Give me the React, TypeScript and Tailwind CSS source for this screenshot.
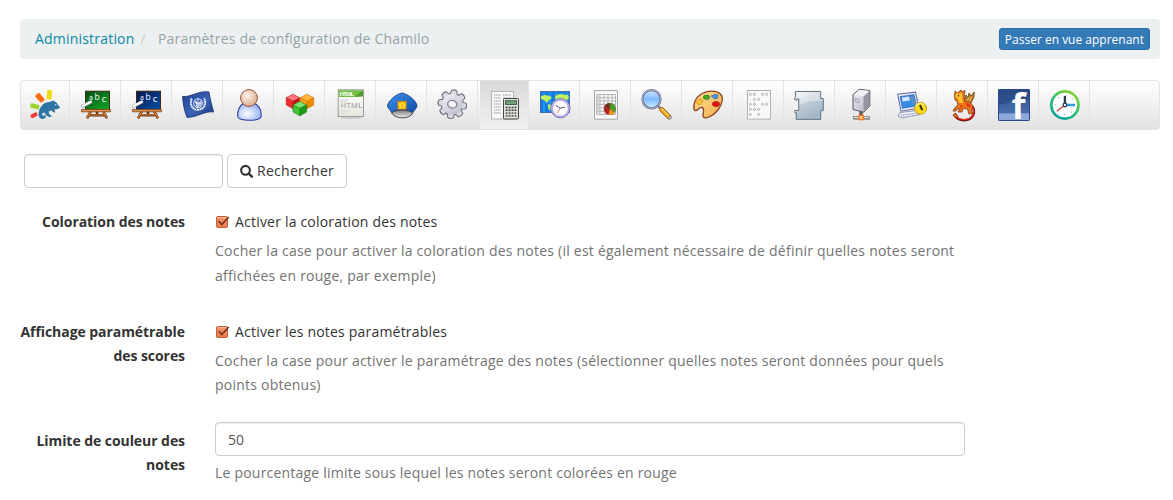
import type { ReactNode } from "react";

const sans = "'Open Sans', sans-serif";

function Chameleon() {
  return (
    <>
      <rect x="17.8" y="1" width="5" height="9.5" rx="1.2" fill="#efdc10" transform="rotate(6 20 6)" />
      <rect x="8.2" y="4" width="5.4" height="9.5" rx="1.2" fill="#ff6a13" transform="rotate(-42 11 8.7)" />
      <rect x="1.3" y="15" width="9" height="4.6" rx="1.2" fill="#9bd22d" transform="rotate(14 5.7 17.3)" />
      <rect x="1.4" y="24.2" width="7" height="4" rx="1.2" fill="#ee3b3b" transform="rotate(-28 5 26)" />
      <path
        d="M10 22.5C11 17 15.5 12.8 20.5 13L24 11.6L27.5 13.4L29 16L31.2 18.6C29.5 20.3 27 20.6 25.2 20.5L26.5 23.5L24 23L22.5 21.4L19.5 22.5L20.5 25.4L23 27L20.5 28.2L17.5 26.4L15.5 23.8C13.5 23.4 12.6 25 13.5 26.2C14.3 27.2 15.8 26.7 15.8 25.5C18 27 16.5 30.2 13.3 30C9.6 29.5 9 25.5 10 22.5Z"
        fill="#2f75a3"
      />
      <circle cx="26.5" cy="15.8" r=".8" fill="#d8ecf7" />
    </>
  );
}

function Board({ id, from, to }: { id: string; from: string; to: string }) {
  return (
    <>
      <defs>
        <linearGradient id={id} x1="0" y1="0" x2="1" y2="1">
          <stop offset="0" stopColor={from} />
          <stop offset="1" stopColor={to} />
        </linearGradient>
      </defs>
      <path d="M11 22L7 29.3M23 22L27 29.3M9 26.3H25M17 22V27" stroke="#6b3410" strokeWidth="2.6" />
      <path d="M11 22L7 29M23 22L27 29M9.5 26H24.5" stroke="#d3823b" strokeWidth="1.2" />
      <rect x="5.5" y="2.2" width="24" height="18.6" fill={`url(#${id})`} stroke="#3c2a16" />
      <rect x="1.4" y="20.4" width="29.2" height="2.4" rx=".6" fill="#e09550" stroke="#7a3d12" strokeWidth=".8" />
      <text x="9" y="10.5" fontFamily={sans} fontSize="7" fill="#fff">a</text>
      <text x="14.6" y="11" fontFamily={sans} fontSize="8.5" fill="#fff">b</text>
      <text x="21.7" y="12.7" fontFamily={sans} fontSize="9.5" fill="#fff">c</text>
      <path d="M2.8 17.2L10.8 13" stroke="#9a9aa2" strokeWidth="3.2" strokeLinecap="round" />
      <path d="M2.8 17L10.8 12.8" stroke="#fff" strokeWidth="2.2" strokeLinecap="round" />
    </>
  );
}

function Flag() {
  return (
    <>
      <defs>
        <linearGradient id="flag" x1="0" y1="0" x2="1" y2="1">
          <stop offset="0" stopColor="#1e3f91" />
          <stop offset=".55" stopColor="#3a62b6" />
          <stop offset="1" stopColor="#173581" />
        </linearGradient>
      </defs>
      <path d="M.6 7.5C9 8.5 17 1.2 27 3C28 10 30 17 31.6 23C23 21.5 15 28.7 5 28.4C2 21 1 14 .6 7.5Z" fill="url(#flag)" stroke="#122a69" strokeWidth=".8" />
      <g fill="none" stroke="#e8eefb">
        <circle cx="16" cy="14.2" r="4.4" strokeWidth="1" />
        <path d="M12 11L19 18M20 11L13 18M16 10V19" strokeWidth=".8" />
        <path d="M9.8 9.5C7.3 15 10 20.8 16 20.8C22.4 20.3 24.7 15 22 8.8" strokeWidth="1.9" strokeDasharray="2 .4" />
      </g>
      <path d="M13 12L16 13L14 16ZM17 14L20 13L18 17ZM14 16L17 17L15 18Z" fill="#fff" />
    </>
  );
}

function Person() {
  return (
    <>
      <defs>
        <radialGradient id="head" cx=".4" cy=".35" r=".7">
          <stop offset="0" stopColor="#fff4ea" />
          <stop offset="1" stopColor="#dba98a" />
        </radialGradient>
        <radialGradient id="body" cx=".4" cy=".6" r=".7">
          <stop offset="0" stopColor="#fff" />
          <stop offset="1" stopColor="#86a9f5" />
        </radialGradient>
      </defs>
      <path d="M10 14.5H22C26 17 28.4 22 28.2 27C28 30 24 31.3 16.4 31.3C8.5 31.3 4.8 30 4.7 27C4.6 22 6 17.5 10 14.5Z" fill="url(#body)" stroke="#293ca0" strokeWidth="1.1" />
      <circle cx="16" cy="9" r="8.4" fill="url(#head)" stroke="#97523d" strokeWidth="1" />
    </>
  );
}

function Cube({ x, y, top, left, right, edge }: { x: number; y: number; top: string; left: string; right: string; edge: string }) {
  return (
    <g transform={`translate(${x} ${y})`} stroke={edge} strokeWidth=".5" strokeLinejoin="round">
      <path d="M0-7.2L6.8-3.6L0 0L-6.8-3.6Z" fill={top} />
      <path d="M-6.8-3.6L0 0V7.4L-6.8 3.6Z" fill={left} />
      <path d="M6.8-3.6L0 0V7.4L6.8 3.6Z" fill={right} />
    </g>
  );
}

function Cubes() {
  return (
    <>
      <Cube x={9} y={12.3} top="#ff7474" left="#f02c2c" right="#c91414" edge="#a81a1a" />
      <Cube x={23} y={12.3} top="#ffb638" left="#ffa116" right="#ee8a00" edge="#c07000" />
      <Cube x={15.8} y={19.5} top="#7ee06c" left="#45c535" right="#169a17" edge="#147a14" />
    </>
  );
}

function Html() {
  return (
    <>
      <defs>
        <linearGradient id="page" x1="0" y1="0" x2="0" y2="1">
          <stop offset="0" stopColor="#fff" />
          <stop offset="1" stopColor="#e6e6e0" />
        </linearGradient>
      </defs>
      <ellipse cx="16" cy="28.8" rx="11" ry="1.2" fill="#cfcfcf" />
      <rect x="3.2" y=".8" width="25.2" height="26.8" fill="url(#page)" stroke="#8f918b" strokeWidth=".9" />
      <path d="M3.6 1.2H28V5.5L22 8H3.6Z" fill="#72bd43" />
      <path d="M28 1.2V7.5L20 8Z" fill="#4d9c2b" />
      <text x="4.5" y="7" fontFamily={sans} fontWeight="700" fontSize="6" textLength="14.5" fill="#fff">HTML</text>
      <path d="M5 11H14M5 13H12M5 22H15M5 24H11" stroke="#d5d5d0" />
      <text x="5.6" y="19" fontFamily={sans} fontSize="7.6" textLength="21.5" fill="#8f8f8f">HTML</text>
    </>
  );
}

function Cap() {
  return (
    <>
      <defs>
        <linearGradient id="cap" x1="0" y1="0" x2="1" y2="1">
          <stop offset="0" stopColor="#3f95ee" />
          <stop offset="1" stopColor="#0b4aaa" />
        </linearGradient>
        <linearGradient id="visor" x1="0" y1="0" x2="0" y2="1">
          <stop offset="0" stopColor="#7c7c7c" />
          <stop offset="1" stopColor="#eee" />
        </linearGradient>
      </defs>
      <path d="M16 4C22 5 30.8 12 31 17C31 19 28 21 26.5 24H6C4.5 21 1.6 19 1.5 17C2 12 10 5 16 4Z" fill="url(#cap)" stroke="#183d87" strokeWidth=".9" />
      <path d="M5.7 24C9 20 23 20 26.7 24C24 30.5 9 30.5 5.7 24Z" fill="url(#visor)" stroke="#333a46" strokeWidth=".9" />
      <path d="M12 12.3L14 13L16 12.2L18 13L20 12.3V20H12Z" fill="#ffdc31" stroke="#e08a00" strokeWidth="1.2" />
      <path d="M15 14.5H17V18H15Z" fill="#f8b81c" />
    </>
  );
}

function Gear() {
  const teeth = [0, 45, 90, 135, 180, 225, 270, 315];
  return (
    <>
      <defs>
        <linearGradient id="gear" x1="0" y1="0" x2="1" y2="1">
          <stop offset="0" stopColor="#f4f4fa" />
          <stop offset="1" stopColor="#b7b9c7" />
        </linearGradient>
      </defs>
      <g transform="translate(15.3 15.2) rotate(8)">
        {teeth.map((a) => (
          <path key={a} d="M-3.6-9L-2.7-13.5Q0-15.2 2.7-13.5L3.6-9Z" transform={`rotate(${a})`} fill="#e7e7f0" stroke="#70727f" strokeWidth="1.2" />
        ))}
        <circle r="11.2" fill="#70727f" />
        {teeth.map((a) => (
          <path key={a} d="M-3.2-7L-2.3-13Q0-14.3 2.3-13L3.2-7Z" transform={`rotate(${a})`} fill="#d8d8e3" />
        ))}
        <circle r="10.4" fill="url(#gear)" />
        <ellipse rx="4.6" ry="3.8" fill="#f4f4f4" stroke="#858795" strokeWidth="1.3" />
      </g>
    </>
  );
}

function Calculator() {
  return (
    <>
      <rect x="3.6" y="2.4" width="22" height="27.6" fill="#fafafa" stroke="#b0b0b0" />
      <path d="M6 6H13M15 6H23M6 9H13M15 9H23M6 12H13M6 15H13M6 18H13M6 21H13M6 24H13" stroke="#b4b4b4" strokeWidth="1.7" strokeDasharray="1.5 .6" />
      <rect x="15.5" y="9.5" width="15" height="20.5" rx="1" fill="#deded9" stroke="#454944" />
      <rect x="17.6" y="11.8" width="10.8" height="3.6" fill="#75a77e" stroke="#2e5134" strokeWidth=".9" />
      <path d="M17.8 18.5H28.5M17.8 21.3H28.5M17.8 24.1H28.5M17.8 26.9H28.5" stroke="#333" strokeWidth="1.4" strokeDasharray="1.8 1.1" />
    </>
  );
}

function MapClock() {
  return (
    <>
      <rect x="1.4" y="2.4" width="29" height="21.2" fill="#127be6" stroke="#365d9c" strokeWidth=".8" />
      <path d="M5 3V23M11 3V23M17 3V23M23 3V23M28 3V23" stroke="#35a0f5" strokeWidth="1.3" />
      <path d="M2 7L6 6L11 7L13 9L10 11L8 14L5 11L2 10ZM9 15L12 16L11 22L9 19ZM16 7L20 5L29 6L30 9L27 12L24 10L19 12L16 10Z" fill="#bff05e" />
      <circle cx="21.4" cy="19.2" r="9.6" fill="#f6f4ff" stroke="#6d65ac" strokeWidth="1" />
      <circle cx="21.4" cy="19.2" r="8.3" fill="#fff" stroke="#b4a9e2" strokeWidth="1.6" />
      <circle cx="21.4" cy="19.2" r="6.2" fill="none" stroke="#aaa" strokeWidth=".6" strokeDasharray=".6 2.5" />
      <path d="M16.5 16.3L21.4 19.2L26 18" fill="none" stroke="#595968" strokeWidth="1" />
      <path d="M21.7 18.8L18 24" stroke="#df5c4f" strokeWidth=".9" />
    </>
  );
}

function Report() {
  return (
    <>
      <rect x="4.5" y="1.6" width="22.9" height="28.6" fill="#f9f9f9" stroke="#a5a5a5" />
      <path d="M6.5 5.5H25.5V25.5H6.5ZM6.5 8.8H25.5M6.5 12H25.5M6.5 15.4H25.5M6.5 18.8H25.5M6.5 22.2H25.5M10 5.5V25.5M14 5.5V25.5M18 5.5V25.5M22 5.5V25.5" fill="none" stroke="#b5b5b5" />
      <path d="M6.5 5.5H10V25.5H6.5Z" fill="#c6c6c6" fillOpacity=".5" />
      <circle cx="19.8" cy="20" r="5.9" fill="#b52020" />
      <path d="M19.8 20V14.1A5.9 5.9 0 0 1 24.5 23.5Z" fill="#4b9c2c" />
      <path d="M19.8 20L24.5 23.5A5.9 5.9 0 0 1 18.5 25.8Z" fill="#ed9a20" />
      <path d="M19.8 20V14.1A5.9 5.9 0 0 0 14.2 18Z" fill="#7a3020" />
    </>
  );
}

function Magnifier() {
  return (
    <>
      <defs>
        <linearGradient id="lens" x1="0" y1="0" x2="0" y2="1">
          <stop offset="0" stopColor="#d4eaff" />
          <stop offset=".5" stopColor="#7bb8ff" />
          <stop offset="1" stopColor="#d3f6ff" />
        </linearGradient>
      </defs>
      <path d="M17 17L21 21" stroke="#7e8089" strokeWidth="2.4" />
      <path d="M20.7 20.5L28.2 28" stroke="#975400" strokeWidth="4.6" strokeLinecap="round" />
      <path d="M20.7 20.5L27.5 27.3" stroke="#f4ac26" strokeWidth="3.2" strokeLinecap="round" />
      <path d="M21.2 19.8L28 26.4" stroke="#ffe27d" strokeWidth="1" />
      <circle cx="29" cy="28.6" r="1.5" fill="#ccc" stroke="#777" strokeWidth=".6" />
      <circle cx="10.5" cy="10.2" r="9.1" fill="url(#lens)" stroke="#696f93" strokeWidth="2.2" />
      <circle cx="10.5" cy="10.2" r="9.2" fill="none" stroke="#b8bcd5" strokeWidth=".8" />
    </>
  );
}

function Palette() {
  return (
    <>
      <defs>
        <linearGradient id="wood" x1="0" y1="0" x2="1" y2="1">
          <stop offset="0" stopColor="#ffe294" />
          <stop offset="1" stopColor="#f2aa4d" />
        </linearGradient>
      </defs>
      <path d="M2 16C3 8 11 2.1 20 2.2C27 2.2 31 6 30.3 11C29.5 18 24 25 17 28C13 29.8 10.5 28.7 11 26C11.4 23 12.5 20 10.5 18.6C8.5 17.4 6.5 20.3 4.5 21.3C2 22.4 1.4 19 2 16Z" fill="url(#wood)" stroke="#8e4021" strokeWidth="1.3" />
      <ellipse cx="7.7" cy="12.8" rx="3.2" ry="2.4" fill="#ffc130" stroke="#c57b1c" strokeWidth=".6" transform="rotate(-30 7.7 12.8)" />
      <ellipse cx="14.5" cy="8.3" rx="3.2" ry="2.2" fill="#40a91e" stroke="#286e16" strokeWidth=".6" />
      <path d="M19 7L23 5.5L26 6L25.2 9.5L22.5 9.8Z" fill="#4391ee" stroke="#2459a6" strokeWidth=".6" />
      <ellipse cx="24" cy="15" rx="3.6" ry="2.6" fill="#e51313" stroke="#97120e" strokeWidth=".6" />
    </>
  );
}

const brailleDots: [number, number][] = [
  [0, 0], [1, 0], [3, 0], [4, 0], [1, 1], [2, 1], [0, 2], [1, 2], [3, 2], [4, 2], [0, 3], [1, 3], [2, 3], [0, 4], [2, 4],
];

function Braille() {
  return (
    <>
      <rect x="4.5" y="1.5" width="23" height="28.6" fill="#f8f8f8" stroke="#b0b0b0" />
      {brailleDots.map(([c, r]) => (
        <circle key={`${c}-${r}`} cx={7.4 + c * 4.05} cy={5.4 + r * 5} r="1" fill="#fff" stroke="#919191" strokeWidth=".7" />
      ))}
    </>
  );
}

function Puzzle() {
  return (
    <>
      <defs>
        <linearGradient id="puzzle" x1="0" y1="0" x2=".5" y2="1">
          <stop offset="0" stopColor="#edf3f7" />
          <stop offset=".5" stopColor="#bfcbd5" />
          <stop offset="1" stopColor="#a2b5c4" />
        </linearGradient>
      </defs>
      <path d="M1.5 2.6H26.8V9.8H29.3V21.6H26.8V30.2H2V22.7L4.6 21.4V11L1.5 9.7Z" fill="url(#puzzle)" />
      <path d="M4.8 17C12 11 22 12 29 12V10H26.7V3H3V8.6L5 10Z" fill="#fff" fillOpacity=".35" />
      <path d="M.8 8.3V11H2.7V10H4.8V21.5H.8V23.7H2.2V30.4H26.7V21.7H29.3V9.5H26.7V2.5H1.4V8.3" fill="none" stroke="#647582" strokeWidth="1" />
    </>
  );
}

function Server() {
  return (
    <>
      <defs>
        <linearGradient id="server" x1="0" y1="0" x2="1" y2="1">
          <stop offset="0" stopColor="#f4f4f8" />
          <stop offset="1" stopColor="#b0b0be" />
        </linearGradient>
      </defs>
      <path d="M16 22V29M8.3 28.8H25" stroke="#5d5d63" strokeWidth="3.4" />
      <path d="M9 28.5H24.6" stroke="#e2e2e6" strokeWidth="1.8" />
      <path d="M8 5.6L14.2.3L24.8 1.5V17L18.6 23.2L8 20.5Z" fill="url(#server)" stroke="#55555e" strokeWidth="1" />
      <path d="M8.5 5.8L14.5.8L24.4 2L18.5 7.4Z" fill="#f0f0f5" />
      <path d="M18.5 7.5L24.4 2.2V16.8L18.5 22.6Z" fill="#9494a2" />
      <path d="M10 9L14 10V14L10 13Z" fill="#c8c8d5" stroke="#8c8c99" strokeWidth=".5" />
      <path d="M11 16L17 18M11 18L17 20" stroke="#c3c3cd" strokeWidth=".7" />
      <rect x="13.9" y="26.3" width="4.4" height="4.4" fill="#ffc489" stroke="#f4741b" strokeWidth="1.2" />
    </>
  );
}

function SecureComputer() {
  return (
    <>
      <path d="M4 23.5L20 21.5L24 25.5L6 29L2 27Z" fill="#ededfa" stroke="#8a8eb4" strokeWidth=".9" />
      <path d="M5 26.5L21 24" stroke="#8d91b4" strokeDasharray="1.4 .7" />
      <path d="M1.7 5.2L19.5 3.2L22.7 19L5 22.2Z" fill="#eeeef9" stroke="#6870a5" strokeWidth="1.1" />
      <path d="M4 7.6L18 5.6L20.5 17L6.3 19.4Z" fill="#388be5" stroke="#285fb0" strokeWidth=".6" />
      <path d="M6 8.5L13 7.6L14 11.5L6.7 12.6Z" fill="#fff" fillOpacity=".8" />
      <path d="M16 7C15 13 18 14 21 16M22 10C21 13 21 15 23 17" fill="none" stroke="#8c8c94" strokeWidth="1.2" />
      <circle cx="24.6" cy="19.3" r="6" fill="#ffd91b" stroke="#be9200" strokeWidth=".8" />
      <path d="M19.8 17C21 14.5 25 13.3 28 16" fill="none" stroke="#fff493" strokeWidth="1.2" />
      <path d="M24.2 16.8L25 18.3L26 20.5" stroke="#222" strokeWidth="1.9" strokeLinecap="round" />
    </>
  );
}

function Griffin() {
  return (
    <>
      <path d="M8 26C11 33 23 33 26.3 26C28.6 19 25 15.5 19 16" fill="none" stroke="#7e1310" strokeWidth="2.4" />
      <path d="M8 26C11 32 23 32 26 26C28 19 25 16 19 16.5" fill="none" stroke="#f22b20" strokeWidth="1.2" />
      <path d="M17 12L19 6L21 9L22 4L24 7L27.3 3L27 8L24 14L19 16Z" fill="#c7852b" stroke="#5c3412" strokeWidth=".8" />
      <path d="M20 13L22 8M22 13L25 8" stroke="#eec16a" strokeWidth=".8" />
      <path d="M7.5 7L8 2L10.5 4L14 1L15 3L18 1.5L17 8L18 12L23 13L26 17L24.5 22L26 24.5L22 25L20.5 20L16 19.5L15 23L11 23L13 20L10 20L9 22L6 22L8 18.5L11 16L10 12L8 11Z" fill="#ed751c" stroke="#823b12" strokeWidth=".8" />
      <path d="M9 4L12 5L15 3L15.4 9L16 14L12 14L11 10L8.5 8Z" fill="#ffc22c" />
      <path d="M18 14L22 14.5L24.5 18L20.5 18ZM13 16L16 17L13 19Z" fill="#e63a1a" />
      <circle cx="11.5" cy="6.7" r=".8" fill="#4a2411" />
      <path d="M6 26L8.5 24L11 28L8 28.8Z" fill="#f16b14" stroke="#6d1d0b" strokeWidth=".7" />
    </>
  );
}

function Facebook() {
  return (
    <>
      <defs>
        <linearGradient id="fb" x1="0" y1="0" x2="0" y2="1">
          <stop offset="0" stopColor="#30538f" />
          <stop offset="1" stopColor="#4f75b5" />
        </linearGradient>
        <clipPath id="fbclip">
          <rect width="32" height="32" rx="1.5" />
        </clipPath>
      </defs>
      <g clipPath="url(#fbclip)">
        <rect width="32" height="32" fill="url(#fb)" />
        <path d="M0 0H32V10C20 11 9 13 0 17Z" fill="#233e75" fillOpacity=".45" />
        <rect y="24.3" width="32" height="7.7" fill="#8ca9d9" />
        <text x="13.6" y="30.4" fontFamily={sans} fontWeight="700" fontSize="36" fill="#fff">f</text>
      </g>
      <rect x=".5" y=".5" width="31" height="31" rx="1.2" fill="none" stroke="#27498b" />
    </>
  );
}

function Clock() {
  return (
    <>
      <defs>
        <linearGradient id="ring" x1=".8" y1="0" x2=".2" y2="1">
          <stop offset="0" stopColor="#8dd22e" />
          <stop offset=".5" stopColor="#2fbf71" />
          <stop offset="1" stopColor="#0ba3a1" />
        </linearGradient>
      </defs>
      <circle cx="15.9" cy="16" r="13.6" fill="#fbfdff" stroke="url(#ring)" strokeWidth="2.7" />
      <circle cx="15.9" cy="16" r="9.6" fill="none" stroke="#92979b" strokeWidth="1.1" strokeDasharray=".9 6.64" />
      <path d="M15.9 16L8 22" stroke="#d54132" strokeWidth="1.3" />
      <path d="M16 16H26" stroke="#319de1" strokeWidth="2.5" />
      <path d="M15.9 16V7" stroke="#27394c" strokeWidth="2.3" />
      <circle cx="15.9" cy="16" r="1.8" fill="#fff" stroke="#27394c" strokeWidth="1.3" />
    </>
  );
}

const tabs: { name: string; icon: ReactNode }[] = [
  { name: "portal", icon: <Chameleon /> },
  { name: "course", icon: <Board id="boardGreen" from="#064b12" to="#0dab29" /> },
  { name: "session", icon: <Board id="boardBlue" from="#04144b" to="#0753a8" /> },
  { name: "languages", icon: <Flag /> },
  { name: "user", icon: <Person /> },
  { name: "tools", icon: <Cubes /> },
  { name: "editor", icon: <Html /> },
  { name: "security", icon: <Cap /> },
  { name: "tuning", icon: <Gear /> },
  { name: "gradebook", icon: <Calculator /> },
  { name: "timezones", icon: <MapClock /> },
  { name: "tracking", icon: <Report /> },
  { name: "search", icon: <Magnifier /> },
  { name: "stylesheets", icon: <Palette /> },
  { name: "templates", icon: <Braille /> },
  { name: "plugins", icon: <Puzzle /> },
  { name: "ldap", icon: <Server /> },
  { name: "cas", icon: <SecureComputer /> },
  { name: "shibboleth", icon: <Griffin /> },
  { name: "facebook", icon: <Facebook /> },
  { name: "crons", icon: <Clock /> },
];

function Checkbox() {
  return (
    <svg className="mt-[5px] mr-1 h-4 w-4 shrink-0" viewBox="0 0 16 16">
      <defs>
        <linearGradient id="check" x1="0" y1="0" x2="0" y2="1">
          <stop offset="0" stopColor="#f69268" />
          <stop offset="1" stopColor="#ee7b4c" />
        </linearGradient>
      </defs>
      <rect x="1.5" y="1.5" width="11" height="11" rx="1.5" fill="url(#check)" stroke="#b85f3b" />
      <path d="M2.6 2.7H11.5" stroke="#ffc0a2" />
      <path d="M3.7 6.2L6.8 9.5L13.7 2" fill="none" stroke="#743620" strokeWidth="1.7" />
    </svg>
  );
}

function Row({ label, children }: { label: string; children: ReactNode }) {
  return (
    <div className="flex">
      <div className="w-[165px] shrink-0 pt-[7px] text-right font-bold tracking-[-0.06px] text-[#333]">{label}</div>
      <div className="ml-[30px] w-[750px]">{children}</div>
    </div>
  );
}

function CheckRow({ label, option, help }: { label: string; option: string; help: string }) {
  return (
    <Row label={label}>
      <label className="flex pt-[7px]">
        <Checkbox />
        <span className="tracking-[0.2px]">{option}</span>
      </label>
      <p className="mt-[5px] tracking-[0.23px] text-[#737373]">{help}</p>
    </Row>
  );
}

export default function App() {
  return (
    <div className="h-[500px] overflow-hidden bg-white px-5 pt-[19px] pr-[13px] font-['Open_Sans',sans-serif] text-sm leading-[24.28px] text-[#333]">
      <nav className="flex h-10 items-center rounded bg-[#ecf0f1] pr-[10px] pl-[15px] tracking-[0.2px]">
        <a className="text-[#0a87a5]">Administration</a>
        <span className="ml-[6px] text-[#ccc]">/</span>
        <span className="ml-[12px] text-[#95a5a6]">Paramètres de configuration de Chamilo</span>
        <button className="ml-auto h-[22px] rounded-[3px] border border-[#2e6da4] bg-[#337ab7] px-[5px] pt-px text-xs leading-5 tracking-normal text-white">
          Passer en vue apprenant
        </button>
      </nav>

      <div className="mt-[21px] flex h-[50px] gap-[2px] rounded border border-[#e3e3e3] bg-linear-to-b from-white to-[#e2e2e2]">
        {tabs.map((tab) => (
          <div
            key={tab.name}
            className={`h-12 w-[49px] shrink-0 border-r border-[#e3e3e3] pt-2 pl-2 ${tab.name === "gradebook" ? "bg-linear-to-b from-[#dadada] to-[#f0f0f0]" : ""}`}
          >
            <svg className="h-8 w-8 overflow-visible" viewBox="0 0 32 32" fill="none">
              {tab.icon}
            </svg>
          </div>
        ))}
      </div>

      <div className="mt-6 flex gap-1 pl-1">
        <input className="h-[34px] w-[199px] rounded border border-[#ccc] px-3 shadow-[inset_0_1px_1px_rgba(0,0,0,0.075)]" />
        <button className="flex h-[34px] w-[120px] items-center rounded border border-[#ccc] bg-white pl-3 tracking-[0.28px]">
          <svg className="mr-1 h-[14px] w-[13px]" viewBox="0 0 13 14" fill="none">
            <circle cx="5.5" cy="6.3" r="4.4" stroke="#333" strokeWidth="2.1" />
            <path d="M8.8 9.6L11.9 12.7" stroke="#333" strokeWidth="2.4" strokeLinecap="round" />
          </svg>
          Rechercher
        </button>
      </div>

      <div className="mt-[15px] flex flex-col gap-[24.7px]">
        <CheckRow
          label="Coloration des notes"
          option="Activer la coloration des notes"
          help="Cocher la case pour activer la coloration des notes (il est également nécessaire de définir quelles notes seront affichées en rouge, par exemple)"
        />
        <CheckRow
          label="Affichage paramétrable des scores"
          option="Activer les notes paramétrables"
          help="Cocher la case pour activer le paramétrage des notes (sélectionner quelles notes seront données pour quels points obtenus)"
        />
        <Row label="Limite de couleur des notes">
          <input
            className="block h-[34px] w-full rounded border border-[#ccc] px-3 text-[#555] shadow-[inset_0_1px_1px_rgba(0,0,0,0.075)]"
            defaultValue="50"
          />
          <p className="mt-[5px] tracking-[0.21px] text-[#737373]">Le pourcentage limite sous lequel les notes seront colorées en rouge</p>
        </Row>
      </div>
    </div>
  );
}
